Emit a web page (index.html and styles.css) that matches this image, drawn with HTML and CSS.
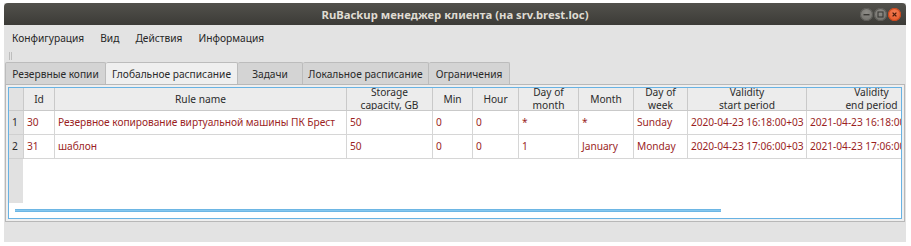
FILE: index.html
```html
<!DOCTYPE html>
<html lang="ru">
<head>
<meta charset="utf-8">
<title>RuBackup менеджер клиента</title>
<link rel="stylesheet" href="styles.css">
</head>
<body>
<div class="window">
  <div class="titlebar">
    <span class="title">RuBackup менеджер клиента (на srv.brest.loc)</span>
    <div class="controls">
      <span class="btn btn-min"><svg width="13" height="13" viewBox="0 0 13 13"><rect x="3.5" y="6" width="6" height="1.4" fill="#3a3935"/></svg></span>
      <span class="btn btn-max"><svg width="13" height="13" viewBox="0 0 13 13"><rect x="4" y="4" width="5" height="5" fill="none" stroke="#3a3935" stroke-width="1.1"/></svg></span>
      <span class="btn btn-close"><svg width="13" height="13" viewBox="0 0 13 13"><path d="M4.6 4.6 L8.4 8.4 M8.4 4.6 L4.6 8.4" stroke="#4a1a0a" stroke-width="1.3"/></svg></span>
    </div>
  </div>
  <div class="menubar">
    <span class="menu-item">Конфигурация</span>
    <span class="menu-item">Вид</span>
    <span class="menu-item">Действия</span>
    <span class="menu-item">Информация</span>
  </div>
  <div class="toolbar"><span class="handle"></span></div>
  <div class="tabs">
    <span class="tab t1">Резервные копии</span>
    <span class="tab t2 active">Глобальное расписание</span>
    <span class="tab t3">Задачи</span>
    <span class="tab t4">Локальное расписание</span>
    <span class="tab t5">Ограничения</span>
  </div>
  <div class="pane">
    <div class="view">
      <div class="viewport">
        <div class="grid">
          <div class="h corner"></div>
          <div class="h"><span>Id</span></div>
          <div class="h"><span>Rule name</span></div>
          <div class="h"><span>Storage<br>capacity, GB</span></div>
          <div class="h"><span>Min</span></div>
          <div class="h"><span>Hour</span></div>
          <div class="h"><span>Day of<br>month</span></div>
          <div class="h"><span>Month</span></div>
          <div class="h"><span>Day of<br>week</span></div>
          <div class="h"><span>Validity<br>start period</span></div>
          <div class="h"><span>Validity<br>end period</span></div>

          <div class="rh">1</div>
          <div class="c">30</div>
          <div class="c">Резервное копирование виртуальной машины ПК Брест</div>
          <div class="c">50</div>
          <div class="c">0</div>
          <div class="c">0</div>
          <div class="c">*</div>
          <div class="c">*</div>
          <div class="c">Sunday</div>
          <div class="c">2020-04-23 16:18:00+03</div>
          <div class="c">2021-04-23 16:18:00+03</div>

          <div class="rh">2</div>
          <div class="c">31</div>
          <div class="c">шаблон</div>
          <div class="c">50</div>
          <div class="c">0</div>
          <div class="c">0</div>
          <div class="c">1</div>
          <div class="c">January</div>
          <div class="c">Monday</div>
          <div class="c">2020-04-23 17:06:00+03</div>
          <div class="c">2021-04-23 17:06:00+03</div>
        </div>
        <div class="filler"><div class="rh-fill"></div></div>
      </div>
      <div class="hscroll"><div class="hbar"></div></div>
    </div>
  </div>
</div>
</body>
</html>
```
FILE: styles.css
```css
* { box-sizing: border-box; }
html, body { margin: 0; padding: 0; background: #ffffff; }
body {
  font-family: "Noto Sans", "Open Sans", "DejaVu Sans", sans-serif;
  font-size: 10.2px;
  color: #2b2b2b;
}
.window {
  margin: 3px 0 0 4px;
  width: 902px;
  height: 239px;
  background: #e3e3e3;
  display: flex;
  flex-direction: column;
  overflow: hidden;
}
.titlebar {
  flex: none;
  height: 22px;
  background: linear-gradient(#52514c, #3c3b37);
  border-radius: 4px 4px 0 0;
  display: grid;
  grid-template-columns: 1fr auto 1fr;
  align-items: center;
}
.title {
  grid-column: 2;
  color: #dfdbd2;
  font-weight: bold;
  font-size: 11.3px;
  white-space: nowrap;
}
.controls {
  grid-column: 3;
  justify-self: end;
  display: flex;
  gap: 1px;
  padding-right: 5px;
}
.btn {
  width: 13px;
  height: 13px;
  border-radius: 50%;
  display: block;
}
.btn svg { display: block; }
.btn-min, .btn-max {
  background: radial-gradient(circle at 50% 35%, #8e8c87, #6b6a65);
  box-shadow: inset 0 0 0 1px #5a5955;
}
.btn-close {
  background: radial-gradient(circle at 50% 35%, #f47e55, #e2501f);
  box-shadow: inset 0 0 0 1px #c8461c;
}
.menubar {
  flex: none;
  height: 24px;
  padding-top: 2px;
  display: flex;
  align-items: center;
}
.menu-item {
  padding: 0 8px;
  color: #262626;
}
.toolbar {
  flex: none;
  height: 13px;
  display: flex;
  align-items: center;
  padding-left: 5px;
}
.handle {
  width: 3px;
  height: 8px;
  border-left: 1px solid #bdbdbd;
  border-right: 1px solid #bdbdbd;
}
.tabs {
  flex: none;
  height: 22px;
  display: flex;
  padding-left: 1px;
}
.tab {
  height: 22px;
  display: flex;
  align-items: center;
  justify-content: center;
  background: #d4d4d4;
  border: 1px solid #bcbcbc;
  border-bottom: none;
  border-left: none;
  border-radius: 2px 2px 0 0;
  color: #2a2a2a;
  white-space: nowrap;
}
.tab.t1 { width: 101px; border-left: 1px solid #bcbcbc; }
.tab.t2 { width: 132px; }
.tab.t3 { width: 65px; }
.tab.t4 { width: 126px; }
.tab.t5 { width: 81px; }
.tab.active { background: #efefef; }
.pane {
  flex: none;
  margin: 0 1px;
  height: 138px;
  border: 1px solid #b8b8b8;
  background: #efefef;
  padding: 2px;
}
.view {
  height: 100%;
  border: 1px solid #68b2e3;
  background: #ffffff;
  display: flex;
  flex-direction: column;
  overflow: hidden;
}
.viewport {
  height: 115px;
  display: flex;
  flex-direction: column;
  overflow: hidden;
}
.grid {
  display: grid;
  grid-template-columns: 15px 31px 292px 86px 40px 46px 60px 55px 54px 119px 130px;
  grid-template-rows: 23px;
  grid-auto-rows: 24px;
  width: 928px;
}
.h {
  background: #ececec;
  border-right: 1px solid #c9c9c9;
  border-bottom: 1px solid #c9c9c9;
  display: flex;
  align-items: center;
  justify-content: center;
  overflow: hidden;
  text-align: center;
  line-height: 13px;
  color: #2b2b2b;
}
.h span { white-space: nowrap; }
.h.corner { background: #e2e2e2; }
.rh {
  background: #e1e1e1;
  border-right: 1px solid #d0d0d0;
  border-bottom: 1px solid #d0d0d0;
  display: flex;
  align-items: center;
  padding: 0 0 2px 3px;
  color: #2b2b2b;
}
.c {
  border-right: 1px solid #d6d6d6;
  border-bottom: 1px solid #d6d6d6;
  display: flex;
  align-items: center;
  padding: 0 0 2px 3px;
  color: #9b1f1f;
  white-space: nowrap;
  overflow: hidden;
  letter-spacing: -0.05px;
}
.filler {
  flex: 1;
  display: flex;
}
.rh-fill {
  width: 14px;
  background: #e1e1e1;
}
.hscroll {
  flex: 1;
  display: flex;
  align-items: center;
  padding-left: 6px;
}
.hbar {
  width: 706px;
  height: 3px;
  background: #86c7ee;
  border-top: 1px solid #6db6e4;
  border-bottom: 1px solid #6db6e4;
}
```
